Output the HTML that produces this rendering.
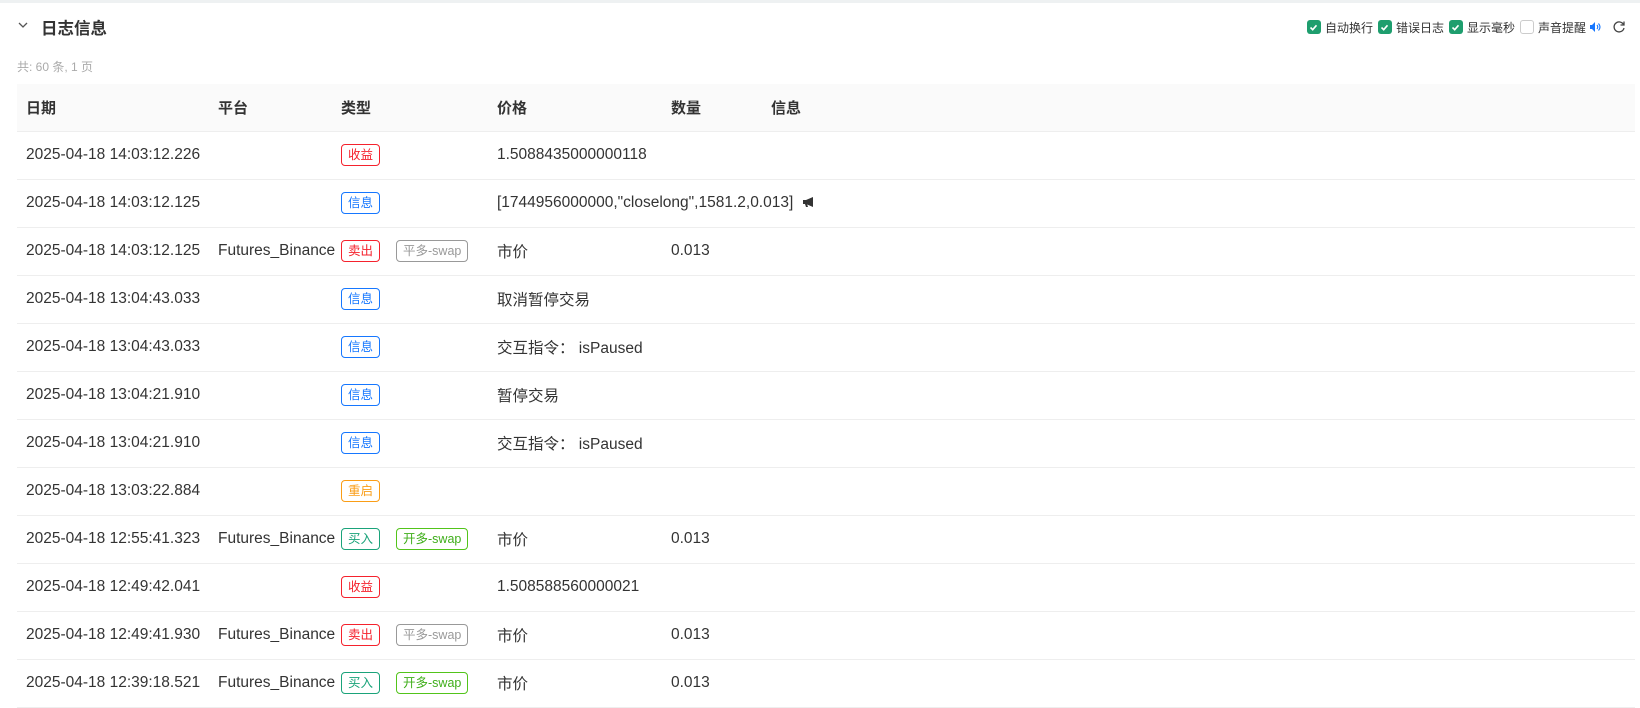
<!DOCTYPE html>
<html><head><meta charset="utf-8"><style>
*{box-sizing:border-box;margin:0;padding:0}
body{width:1640px;height:707px;background:#fff;font-family:"Liberation Sans","Noto Sans CJK SC",sans-serif;color:#333;overflow:hidden;position:relative}
.top{position:absolute;left:0;top:0;width:1640px;height:3px;background:#eef1f2}
.title{position:absolute;left:41px;top:15px;font-size:16.5px;font-weight:bold;color:#333}
.chev{position:absolute;left:18px;top:20px}
.count{position:absolute;left:17px;top:58px;font-size:12px;color:#aaa}
.opts{position:absolute;right:14px;top:17px;display:flex;align-items:center;font-size:12px;color:#333;height:20px}
.cb{width:14px;height:14px;border-radius:3px;background:#1e9e6e;display:inline-flex;align-items:center;justify-content:center;margin-right:4px;margin-left:5px}
.cb.off{background:#fff;border:1px solid #ccc}
table{position:absolute;left:17px;top:84px;width:1618px;border-collapse:collapse;font-size:15.5px;table-layout:fixed}
th{height:47px;background:#fafafa;text-align:left;font-weight:bold;padding-left:9px;border-bottom:1px solid #eee;color:#333;font-size:15px}
td{height:48px;padding-left:9px;border-bottom:1px solid #eee;white-space:nowrap;color:#333}
.t{display:inline-block;height:22px;line-height:20px;font-size:12.5px;padding:0 6px;border:1px solid;border-radius:4px;background:#fff;vertical-align:middle}
.r{color:#f5222d;border-color:#f5222d}.b{color:#1677ff;border-color:#1677ff}.o{color:#fa9d16;border-color:#fa9d16}.g{color:#1aa37a;border-color:#1aa37a}.gr{color:#999;border-color:#999}.lg{color:#3fae1a;border-color:#52c41a}
.s{margin-left:16px}
</style></head><body>
<div class="top"></div>
<svg class="chev" width="10" height="10" viewBox="0 0 10 10"><path d="M1 3 L5 7 L9 3" fill="none" stroke="#555" stroke-width="1.3"/></svg>
<div class="title">日志信息</div>
<div class="count">共: 60 条, 1 页</div>
<div class="opts">
<span class="cb"><svg width="9" height="9" viewBox="0 0 9 9"><path d="M1.5 4.5 L3.7 6.7 L7.5 2.3" fill="none" stroke="#fff" stroke-width="1.6"/></svg></span>自动换行
<span class="cb"><svg width="9" height="9" viewBox="0 0 9 9"><path d="M1.5 4.5 L3.7 6.7 L7.5 2.3" fill="none" stroke="#fff" stroke-width="1.6"/></svg></span>错误日志
<span class="cb"><svg width="9" height="9" viewBox="0 0 9 9"><path d="M1.5 4.5 L3.7 6.7 L7.5 2.3" fill="none" stroke="#fff" stroke-width="1.6"/></svg></span>显示毫秒
<span class="cb off"></span>声音提醒
<svg width="12" height="12" viewBox="0 0 12 12" style="margin-left:3px"><path d="M1 4h2l3-3v10L3 8H1z" fill="#1677ff"/><path d="M8 4q1.5 2 0 4M9.5 2.5q3 3.5 0 7" fill="none" stroke="#1677ff" stroke-width="1.1"/></svg>
<svg width="14" height="14" viewBox="0 0 14 14" style="margin-left:11px"><path d="M11.5 4.5A5 5 0 1 0 12 8" fill="none" stroke="#444" stroke-width="1.3"/><path d="M12 1.5v3.5H8.5" fill="none" stroke="#444" stroke-width="1.3"/></svg>
</div>
<table>
<colgroup><col style="width:192px"><col style="width:123px"><col style="width:156px"><col style="width:174px"><col style="width:100px"><col></colgroup>
<tr><th>日期</th><th>平台</th><th>类型</th><th>价格</th><th>数量</th><th>信息</th></tr>
<tr><td>2025-04-18 14:03:12.226</td><td></td><td><span class="t r">收益</span></td><td>1.5088435000000118</td><td></td><td></td></tr>
<tr><td>2025-04-18 14:03:12.125</td><td></td><td><span class="t b">信息</span></td><td colspan="3" style="overflow:visible">[1744956000000,"closelong",1581.2,0.013] <svg width="14" height="12" viewBox="0 0 14 12" style="margin-left:4px;vertical-align:-1px"><path d="M1 4h3l7-3v10L4 8H1z" fill="#333"/><path d="M3 8l1 3h2l-1-3" fill="#333"/></svg></td></tr>
<tr><td>2025-04-18 14:03:12.125</td><td>Futures_Binance</td><td style="overflow:visible"><span class="t r">卖出</span><span class="t gr s">平多-swap</span></td><td>市价</td><td>0.013</td><td></td></tr>
<tr><td>2025-04-18 13:04:43.033</td><td></td><td><span class="t b">信息</span></td><td>取消暂停交易</td><td></td><td></td></tr>
<tr><td>2025-04-18 13:04:43.033</td><td></td><td><span class="t b">信息</span></td><td>交互指令： isPaused</td><td></td><td></td></tr>
<tr><td>2025-04-18 13:04:21.910</td><td></td><td><span class="t b">信息</span></td><td>暂停交易</td><td></td><td></td></tr>
<tr><td>2025-04-18 13:04:21.910</td><td></td><td><span class="t b">信息</span></td><td>交互指令： isPaused</td><td></td><td></td></tr>
<tr><td>2025-04-18 13:03:22.884</td><td></td><td><span class="t o">重启</span></td><td></td><td></td><td></td></tr>
<tr><td>2025-04-18 12:55:41.323</td><td>Futures_Binance</td><td style="overflow:visible"><span class="t g">买入</span><span class="t lg s">开多-swap</span></td><td>市价</td><td>0.013</td><td></td></tr>
<tr><td>2025-04-18 12:49:42.041</td><td></td><td><span class="t r">收益</span></td><td>1.508588560000021</td><td></td><td></td></tr>
<tr><td>2025-04-18 12:49:41.930</td><td>Futures_Binance</td><td style="overflow:visible"><span class="t r">卖出</span><span class="t gr s">平多-swap</span></td><td>市价</td><td>0.013</td><td></td></tr>
<tr><td>2025-04-18 12:39:18.521</td><td>Futures_Binance</td><td style="overflow:visible"><span class="t g">买入</span><span class="t lg s">开多-swap</span></td><td>市价</td><td>0.013</td><td></td></tr>
</table>
</body></html>
